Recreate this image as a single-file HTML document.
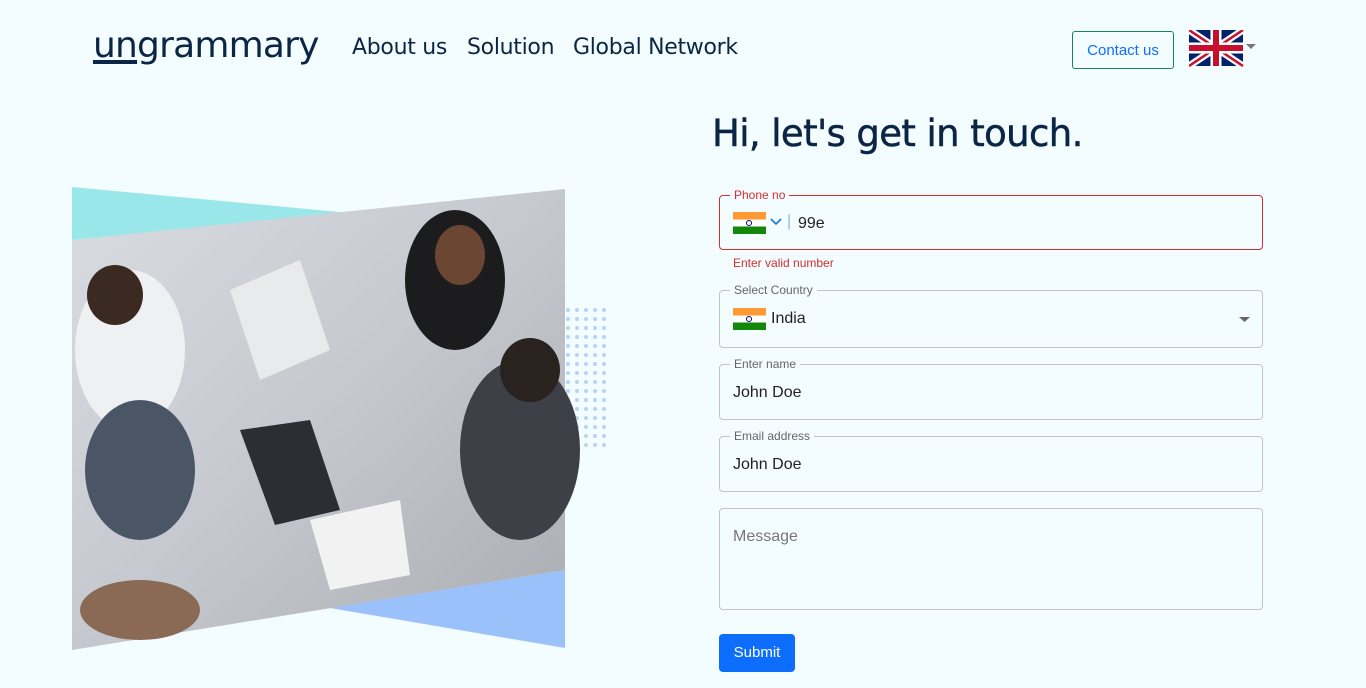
<!DOCTYPE html>
<html><head><meta charset="utf-8"><style>
body{margin:0;width:1366px;height:688px;background:#f3fcff;font-family:"Liberation Sans",sans-serif;position:relative;overflow:hidden}
.nav{position:absolute;font-family:"DejaVu Sans","Liberation Sans",sans-serif;color:#0b2545}
.logo{left:93px;top:25px;font-size:36px;letter-spacing:-0.8px;font-weight:500}
.logo u{text-decoration:underline;text-decoration-thickness:4px;text-underline-offset:3px}
.lnk{top:35px;font-size:22px;letter-spacing:-0.3px}
.contact{position:absolute;left:1072px;top:31px;border:1px solid #198754;border-radius:3px;color:#0d6efd;font-size:15px;text-align:center;line-height:38px;box-sizing:border-box;width:102px;height:38px}
h1{position:absolute;left:712px;top:112px;margin:0;font-family:"DejaVu Sans",sans-serif;font-weight:500;font-size:37px;color:#0b2545;letter-spacing:-0.6px;-webkit-text-stroke:0.5px #0b2545}
.f{position:absolute;left:719px;width:544px;border:1px solid #c4c4c4;border-radius:4px;box-sizing:border-box}
.lab{position:absolute;left:10px;top:-8px;background:#f3fcff;padding:0 4px;font-size:12px;color:#666}
.val{position:absolute;left:13px;font-size:16px;color:#222}
.flag{position:absolute;width:33px;height:22px;background:linear-gradient(#ff9933 0 33%,#fff 33% 66%,#138808 66%)}
.flag:after{content:"";position:absolute;left:13px;top:8px;width:6px;height:6px;border:1px solid #008;border-radius:50%;box-sizing:border-box}
</style></head><body>
<div class="nav logo"><u>un</u>grammary</div>
<div class="nav lnk" style="left:352px">About us</div>
<div class="nav lnk" style="left:467px">Solution</div>
<div class="nav lnk" style="left:573px">Global Network</div>
<div class="contact">Contact us</div>
<svg style="position:absolute;left:1189px;top:30px" width="70" height="37" viewBox="0 0 70 37">
<rect width="54" height="36" fill="#012169"/>
<path d="M0 0L54 36M54 0L0 36" stroke="#fff" stroke-width="7"/>
<path d="M0 0L54 36M54 0L0 36" stroke="#c8102e" stroke-width="2.5"/>
<path d="M27 0V36M0 18H54" stroke="#fff" stroke-width="11"/>
<path d="M27 0V36M0 18H54" stroke="#c8102e" stroke-width="6"/>
<path d="M57 14L67 14L62 19Z" fill="#777"/>
</svg>
<h1>Hi, let's get in touch.</h1>

<svg style="position:absolute;left:60px;top:180px" width="560" height="480">
<defs><pattern id="d" width="9" height="9" patternUnits="userSpaceOnUse"><circle cx="4" cy="4" r="2" fill="#b7d4f7"/></pattern>
<linearGradient id="g" x1="0" y1="0" x2="1" y2="1"><stop offset="0" stop-color="#d9dde2"/><stop offset=".5" stop-color="#c5c9cf"/><stop offset="1" stop-color="#a9adb2"/></linearGradient></defs>
<rect x="502" y="124" width="46" height="148" fill="url(#d)"/>
<polygon points="12,7 290,33 12,60" fill="#9ae7ea"/>
<polygon points="505,390 505,468 270,428" fill="#9bc1fb"/>
<polygon points="12,60 505,9 505,390 12,470" fill="url(#g)"/>
<ellipse cx="70" cy="170" rx="55" ry="80" fill="#eef0f2"/>
<ellipse cx="55" cy="115" rx="28" ry="30" fill="#3b2a22"/>
<ellipse cx="80" cy="290" rx="55" ry="70" fill="#4a5566"/>
<ellipse cx="395" cy="100" rx="50" ry="70" fill="#1c1c1e"/>
<ellipse cx="400" cy="75" rx="25" ry="30" fill="#6b4633"/>
<ellipse cx="460" cy="270" rx="60" ry="90" fill="#3d4046"/>
<ellipse cx="470" cy="190" rx="30" ry="32" fill="#2a221e"/>
<polygon points="180,250 250,240 280,330 215,345" fill="#2b2e33"/>
<polygon points="170,110 240,80 270,170 200,200" fill="#e8eaec"/>
<polygon points="250,340 340,320 350,395 270,410" fill="#f2f2f2"/>
<ellipse cx="80" cy="430" rx="60" ry="30" fill="#8a6a55"/>
</svg>

<div class="f" style="top:195px;height:55px;border-color:#d32f2f"><span class="lab" style="color:#d32f2f">Phone no</span>
<div class="flag" style="left:13px;top:16px"></div>
<svg style="position:absolute;left:50px;top:22px" width="12" height="8"><path d="M1 1L6 6L11 1" stroke="#1976d2" stroke-width="1.6" fill="none"/></svg>
<span style="position:absolute;left:67px;top:17px;color:#90b4e0;font-size:16px">|</span>
<span class="val" style="left:78px;top:19px">99e</span></div>
<div style="position:absolute;left:733px;top:256px;font-size:12px;color:#d32f2f">Enter valid number</div>
<div class="f" style="top:290px;height:58px"><span class="lab">Select Country</span>
<div class="flag" style="left:13px;top:17px"></div><span class="val" style="left:51px;top:19px">India</span>
<svg style="position:absolute;left:519px;top:26px" width="12" height="6"><path d="M0 0H11L5.5 5Z" fill="#666"/></svg></div>
<div class="f" style="top:364px;height:56px"><span class="lab">Enter name</span><span class="val" style="top:19px">John Doe</span></div>
<div class="f" style="top:436px;height:56px"><span class="lab">Email address</span><span class="val" style="top:19px">John Doe</span></div>
<div class="f" style="top:508px;height:102px"><span class="val" style="top:19px;color:#777">Message</span></div>
<div style="position:absolute;left:719px;top:634px;width:76px;height:38px;background:#0d6efd;border-radius:4px;color:#fff;font-size:15px;text-align:center;line-height:38px">Submit</div>
</body></html>
